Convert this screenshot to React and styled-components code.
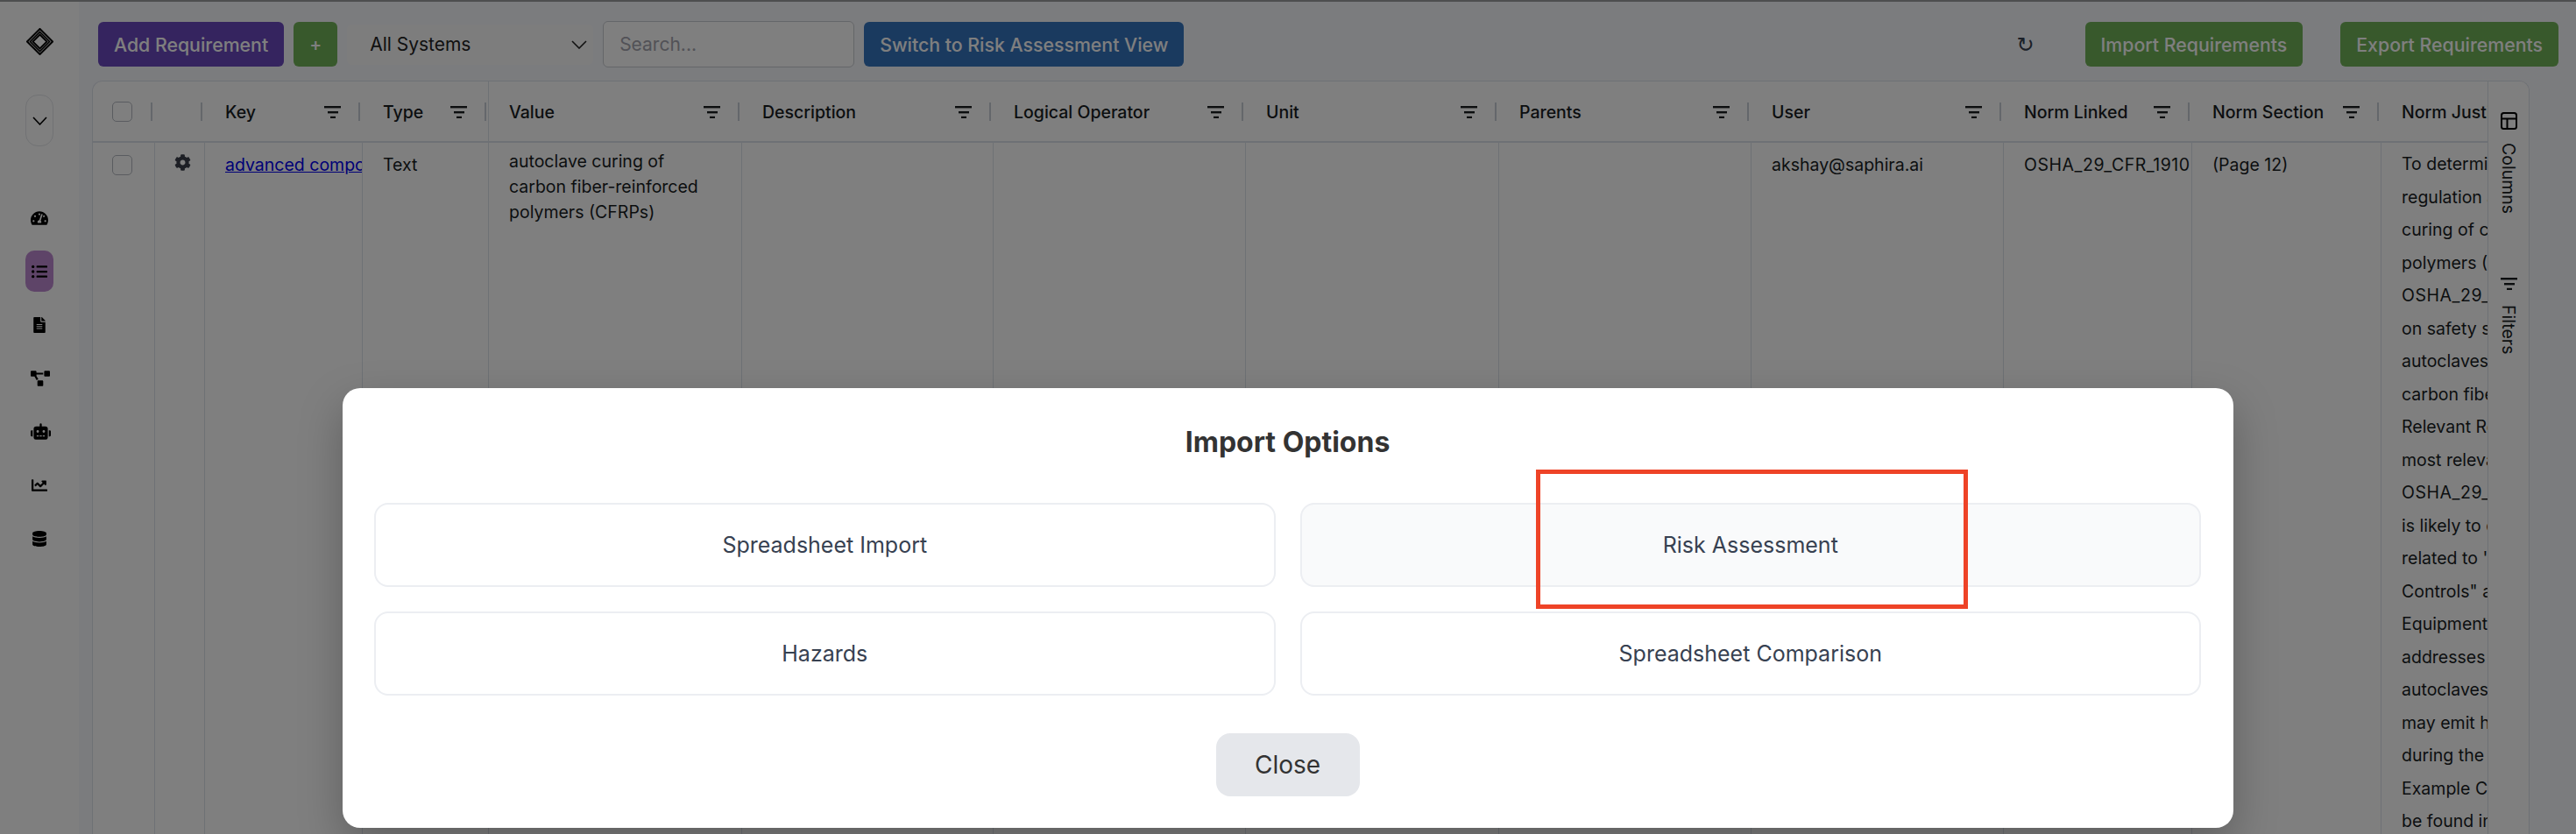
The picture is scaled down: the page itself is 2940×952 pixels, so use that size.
import styled, { createGlobalStyle } from "styled-components";
import {
  FaTachometerAlt,
  FaListUl,
  FaFileAlt,
  FaProjectDiagram,
  FaRobot,
  FaChartLine,
  FaDatabase,
  FaCog,
} from "react-icons/fa";

const columns = [
  { key: "check", width: 71 },
  { key: "gear", width: 57 },
  { key: "Key", width: 180 },
  { key: "Type", width: 144, pinnedEnd: true },
  { key: "Value", width: 289 },
  { key: "Description", width: 287 },
  { key: "Logical Operator", width: 288 },
  { key: "Unit", width: 289 },
  { key: "Parents", width: 288 },
  { key: "User", width: 288 },
  { key: "Norm Linked", width: 215 },
  { key: "Norm Section", width: 216 },
  { key: "Norm Justification", width: 400 },
];

const justification = [
  "To determine which",
  "regulation applies to",
  "curing of carbon",
  "polymers (CFRPs),",
  "OSHA_29_CFR_1910",
  "on safety standards",
  "autoclaves used in",
  "carbon fiber work.",
  "Relevant Regulation:",
  "most relevant is",
  "OSHA_29_CFR_1910",
  "is likely to contain",
  "related to 'Hazard",
  "Controls\" and",
  "Equipment, which",
  "addresses the use of",
  "autoclaves, which",
  "may emit hazardous",
  "during the process.",
  "Example Controls can",
  "be found in the norm",
];

const GlobalStyle = createGlobalStyle`
  html, body {
    margin: 0;
    padding: 0;
    height: 952px;
    overflow: hidden;
    background: #f7f8fc;
    font-family: Inter, "Liberation Sans", sans-serif;
  }
  * { box-sizing: border-box; }
`;

function FilterIcon() {
  return (
    <FilterSvg viewBox="0 0 19 14" aria-hidden="true">
      <rect x="0" y="0" width="19" height="2.4" />
      <rect x="4" y="6" width="12" height="2.4" />
      <rect x="7" y="11.8" width="6" height="2.4" />
    </FilterSvg>
  );
}

function LogoMark() {
  return (
    <svg width="31" height="31" viewBox="0 0 31 31" fill="none" stroke="#000" aria-hidden="true">
      <path d="M15.5 1 L30 15.5 L15.5 30 L1 15.5 Z" strokeWidth="2" />
      <path d="M15.5 4.5 L26.5 15.5 L15.5 26.5 L4.5 15.5 Z" strokeWidth="1.6" />
      <path d="M15.5 7.5 L23.5 15.5 L15.5 23.5 L7.5 15.5 Z" strokeWidth="1.8" />
    </svg>
  );
}

export default function App() {
  return (
    <Page>
      <GlobalStyle />
      <TopStrip />
      <Body>
        <Sidebar>
          <LogoSlot>
            <LogoMark />
          </LogoSlot>
          <ToggleButton>
            <svg width="17" height="10" viewBox="0 0 17 10" fill="none" stroke="#000" strokeWidth="1.6">
              <path d="M1 1 L8.5 9 L16 1" />
            </svg>
          </ToggleButton>
          <NavList>
            <NavItem><FaTachometerAlt size={20} /></NavItem>
            <NavItem $active><FaListUl size={18} /></NavItem>
            <NavItem><FaFileAlt size={18} /></NavItem>
            <NavItem $shift><FaProjectDiagram size={22} /></NavItem>
            <NavItem $shift><FaRobot size={23} /></NavItem>
            <NavItem><FaChartLine size={18} /></NavItem>
            <NavItem><FaDatabase size={18} /></NavItem>
          </NavList>
        </Sidebar>

        <Main>
          <Toolbar>
            <ActionButton $color="#6a48be">Add Requirement</ActionButton>
            <PlusButton>+</PlusButton>
            <SystemSelect>
              All Systems
              <svg width="18" height="10" viewBox="0 0 18 10" fill="none" stroke="#222" strokeWidth="1.6">
                <path d="M1 1 L9 9 L17 1" />
              </svg>
            </SystemSelect>
            <SearchInput placeholder="Search..." />
            <ActionButton $color="#3574be">Switch to Risk Assessment View</ActionButton>
            <RefreshGlyph>↻</RefreshGlyph>
            <ActionButton $color="#70b258">Import Requirements</ActionButton>
            <ExportSlot>
              <ActionButton $color="#70b258">Export Requirements</ActionButton>
            </ExportSlot>
          </Toolbar>

          <Grid>
            <GridMain>
              <HeaderRow>
                {columns.map((col) => (
                  <HeaderCell key={col.key} $width={col.width} $pinnedEnd={col.pinnedEnd}>
                    {col.key === "check" && <HeaderCheck />}
                    {col.key !== "check" && col.key !== "gear" && (
                      <>
                        <HeaderLabel>{col.key}</HeaderLabel>
                        <FilterIcon />
                      </>
                    )}
                    <Separator />
                  </HeaderCell>
                ))}
              </HeaderRow>
              <DataRow>
                <CheckCell $width={71}><CheckBox /></CheckCell>
                <GearCell $width={57}><FaCog size={19} color="#3a3f4a" /></GearCell>
                <Cell $width={180}><KeyLink href="#">advanced composites</KeyLink></Cell>
                <Cell $width={144}>Text</Cell>
                <ValueCell $width={289}>
                  autoclave curing of carbon fiber-reinforced polymers (CFRPs)
                </ValueCell>
                <Cell $width={287} />
                <Cell $width={288} />
                <Cell $width={289} />
                <Cell $width={288} />
                <Cell $width={288}>akshay@saphira.ai</Cell>
                <NormCell $width={215}>OSHA_29_CFR_1910</NormCell>
                <Cell $width={216}>(Page 12)</Cell>
                <JustCell $width={400}>
                  {justification.map((line, i) => (
                    <JustLine key={i} $norm={line.startsWith("OSHA")}>{line}</JustLine>
                  ))}
                </JustCell>
              </DataRow>
            </GridMain>
            <SidePanel>
              <SideTab>
                <svg width="19" height="20" viewBox="0 0 19 20" fill="none" stroke="#000" strokeWidth="2">
                  <rect x="1" y="1" width="17" height="18" rx="2.5" />
                  <path d="M1 7.5 H18 M7.5 7.5 V19" />
                </svg>
                Columns
              </SideTab>
              <SideTab $second>
                <FilterIcon />
                Filters
              </SideTab>
            </SidePanel>
          </Grid>
        </Main>
      </Body>

      <Overlay>
        <Dialog>
          <DialogTitle>Import Options</DialogTitle>
          <OptionGrid>
            <OptionCard>Spreadsheet Import</OptionCard>
            <OptionCard $hover>Risk Assessment</OptionCard>
            <OptionCard>Hazards</OptionCard>
            <OptionCard>Spreadsheet Comparison</OptionCard>
          </OptionGrid>
          <DialogFooter>
            <CloseButton>Close</CloseButton>
          </DialogFooter>
          <Annotation />
        </Dialog>
      </Overlay>
    </Page>
  );
}

const Page = styled.div`
  position: relative;
  width: 2940px;
  height: 952px;
  overflow: hidden;
  display: flex;
  flex-direction: column;
`;

const TopStrip = styled.div`
  height: 2px;
  flex: none;
  background: #9a9c9f;
`;

const Body = styled.div`
  flex: 1;
  display: flex;
  min-height: 0;
`;

const Sidebar = styled.nav`
  width: 90px;
  flex: none;
  background: #fff;
  display: flex;
  flex-direction: column;
  align-items: center;
`;

const LogoSlot = styled.div`
  height: 31px;
  margin-top: 30px;
  line-height: 0;
`;

const ToggleButton = styled.div`
  width: 32px;
  height: 59px;
  margin-top: 45px;
  border: 1px solid #e2e4e8;
  border-radius: 14px;
  display: flex;
  align-items: center;
  justify-content: center;
`;

const NavList = styled.div`
  width: 32px;
  margin-top: 58px;
  display: flex;
  flex-direction: column;
  gap: 14px;
`;

const NavItem = styled.div`
  width: 32px;
  height: 47px;
  border-radius: 10px;
  background: ${(p) => (p.$active ? "#bc88d0" : "transparent")};
  display: flex;
  align-items: center;
  justify-content: ${(p) => (p.$shift ? "flex-start" : "center")};
  padding-left: ${(p) => (p.$shift ? "6px" : "0")};
  color: #000;
`;

const Main = styled.main`
  flex: 1;
  min-width: 0;
  display: flex;
  flex-direction: column;
`;

const Toolbar = styled.div`
  display: flex;
  align-items: center;
  gap: 11px;
  padding: 23px 20px 0 22px;
  height: 74px;
  flex: none;
`;

const ActionButton = styled.button`
  height: 51px;
  padding: 0 18px;
  border: none;
  border-radius: 6px;
  background: ${(p) => p.$color};
  color: #fff;
  font: 500 21.3px Inter, "Liberation Sans", sans-serif;
  white-space: nowrap;
`;

const PlusButton = styled.button`
  width: 50px;
  height: 51px;
  border: none;
  border-radius: 6px;
  background: #70b258;
  color: #fff;
  font: 500 21px Inter, "Liberation Sans", sans-serif;
`;

const SystemSelect = styled.div`
  width: 281px;
  height: 46px;
  padding: 0 7px 0 26px;
  border-radius: 6px;
  background: #fbfbfb;
  color: #222;
  font-size: 21px;
  display: flex;
  align-items: center;
  justify-content: space-between;
`;

const SearchInput = styled.input`
  width: 287px;
  height: 53px;
  padding: 0 18px;
  border: 1px solid #c9ccd2;
  border-radius: 6px;
  background: #fff;
  font: 400 21px Inter, "Liberation Sans", sans-serif;
  &::placeholder {
    color: #a4a4ae;
  }
`;

const RefreshGlyph = styled.span`
  margin-left: auto;
  margin-right: 47px;
  font: 400 24px "DejaVu Sans", sans-serif;
  color: #374151;
`;

const ExportSlot = styled.div`
  margin-left: 32px;
`;

const Grid = styled.section`
  margin: 16px 53px 0 15px;
  flex: 1;
  min-height: 0;
  display: flex;
  background: #fff;
  border: 1px solid #dde2eb;
  border-bottom: none;
  border-radius: 12px 12px 0 0;
  overflow: hidden;
`;

const GridMain = styled.div`
  flex: 1;
  min-width: 0;
  overflow: hidden;
  display: flex;
  flex-direction: column;
`;

const HeaderRow = styled.div`
  display: flex;
  height: 70px;
  flex: none;
  border-bottom: 2px solid #dde2eb;
  width: max-content;
`;

const HeaderCell = styled.div`
  position: relative;
  width: ${(p) => p.$width}px;
  flex: none;
  display: flex;
  align-items: center;
  justify-content: space-between;
  padding: 2px 24px 0 23px;
  border-right: ${(p) => (p.$pinnedEnd ? "1px solid #dde2eb" : "1px solid transparent")};
`;

const HeaderLabel = styled.span`
  font-size: 19.5px;
  font-weight: 500;
  color: #181d1f;
  white-space: nowrap;
  overflow: hidden;
`;

const FilterSvg = styled.svg`
  width: 19px;
  height: 14px;
  flex: none;
  fill: #181d1f;
`;

const Separator = styled.span`
  position: absolute;
  right: 2px;
  top: 24px;
  width: 2px;
  height: 21px;
  background: #c9ced6;
`;

const CheckBox = styled.span`
  display: block;
  width: 23px;
  height: 23px;
  border: 1px solid #b4b8c0;
  border-radius: 5px;
  background: #fff;
`;

const HeaderCheck = styled(CheckBox)`
  margin: -2px 0 0 -1px;
`;

const DataRow = styled.div`
  display: flex;
  flex: 1;
  width: max-content;
`;

const Cell = styled.div`
  width: ${(p) => p.$width}px;
  flex: none;
  padding: 13px 23px 0 23px;
  border-right: 1px solid #dde2eb;
  color: #181d1f;
  font-size: 19.5px;
  line-height: 25px;
  white-space: nowrap;
  overflow: hidden;
`;

const CheckCell = styled(Cell)`
  padding: 14px 0 0 22px;
`;

const GearCell = styled(Cell)`
  padding: 13px 0 0 22px;
`;

const ValueCell = styled(Cell)`
  padding-top: 7px;
  line-height: 29px;
  white-space: normal;
`;

const NormCell = styled(Cell)`
  padding-right: 0;
  letter-spacing: 0.55px;
`;

const JustCell = styled(Cell)`
  padding-top: 6px;
  line-height: 37.5px;
`;

const JustLine = styled.div`
  white-space: nowrap;
  letter-spacing: ${(p) => (p.$norm ? "0.55px" : "0")};
`;

const KeyLink = styled.a`
  color: #0000ee;
  text-decoration: underline;
`;

const SidePanel = styled.aside`
  width: 47px;
  flex: none;
  background: #fefefe;
  border-left: 1px solid #dde2eb;
  display: flex;
  flex-direction: column;
  align-items: center;
  padding-top: 35px;
`;

const SideTab = styled.div`
  writing-mode: vertical-rl;
  display: flex;
  align-items: center;
  gap: ${(p) => (p.$second ? "17px" : "15px")};
  color: #181d1f;
  font-size: 19.5px;
  margin-top: ${(p) => (p.$second ? "73px" : "0")};
`;

const Overlay = styled.div`
  position: absolute;
  inset: 0;
  background: rgba(0, 0, 0, 0.5);
  display: flex;
  justify-content: center;
  align-items: flex-start;
  padding-top: 443px;
`;

const Dialog = styled.div`
  position: relative;
  width: 2158px;
  height: 502px;
  padding: 42px 37px 36px 36px;
  background: #fff;
  border-radius: 20px;
  box-shadow: 0 20px 50px rgba(0, 0, 0, 0.25);
  display: flex;
  flex-direction: column;
`;

const DialogTitle = styled.h2`
  margin: 0 0 49px;
  height: 40px;
  font-size: 32px;
  line-height: 40px;
  font-weight: 700;
  color: #333;
  text-align: center;
`;

const OptionGrid = styled.div`
  display: grid;
  grid-template-columns: 1fr 1fr;
  grid-auto-rows: 96px;
  gap: 28px 28px;
`;

const OptionCard = styled.div`
  display: flex;
  align-items: center;
  justify-content: center;
  border: 2px solid #eceef2;
  border-radius: 16px;
  background: ${(p) => (p.$hover ? "#f9fafb" : "#fff")};
  color: #374151;
  font-size: 25px;
`;

const DialogFooter = styled.div`
  display: flex;
  justify-content: center;
  margin-top: 43px;
`;

const CloseButton = styled.button`
  width: 164px;
  height: 72px;
  border: none;
  border-radius: 16px;
  background: #e5e7eb;
  color: #333;
  font: 400 28px Inter, "Liberation Sans", sans-serif;
`;

const Annotation = styled.div`
  position: absolute;
  left: 1362px;
  top: 93px;
  width: 493px;
  height: 159px;
  border: 5px solid #ee4327;
  pointer-events: none;
`;
